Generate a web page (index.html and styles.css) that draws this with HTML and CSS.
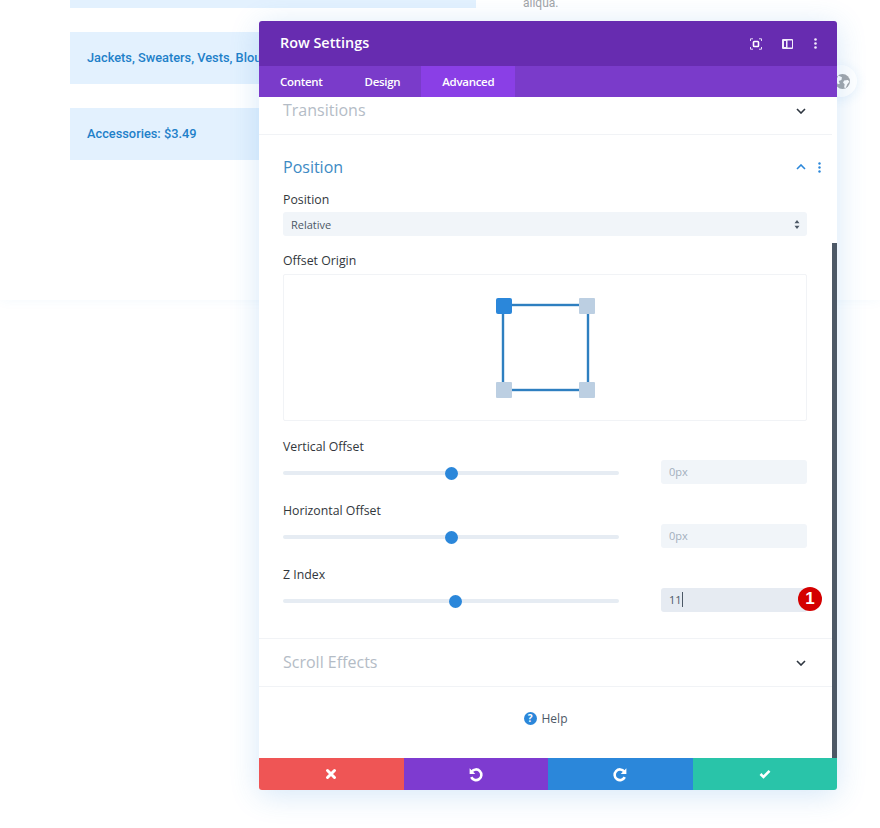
FILE: index.html
```html
<!DOCTYPE html>
<html lang="en">
<head>
<meta charset="utf-8">
<title>Row Settings</title>
<link rel="stylesheet" href="styles.css">
</head>
<body>
<div class="page">
  <section class="backdrop">
    <div class="list">
      <div class="chip chip-top"></div>
      <div class="chip">Jackets, Sweaters, Vests, Blouses: $5.99</div>
      <div class="chip">Accessories: $3.49</div>
    </div>
    <p class="side-text">aliqua.</p>
  </section>

  <div class="globe-btn">
    <svg class="globe" viewBox="0 0 14 14" width="15" height="15"><circle cx="7" cy="7" r="7" fill="#a3a6aa"/><path d="M3 1.500 6.500 3 6 5.500 3.500 6.500 4.500 9 2.500 9.500 1 6ZM8.500 6 12 5.500 13.500 7 11.500 9.500 10 13 8.500 12.500 9 9.500 7.500 8Z" fill="#fff"/></svg>
  </div>

  <div class="modal">
    <header class="modal-head">
      <h1 class="modal-title">Row Settings</h1>
      <div class="head-icons">
        <svg class="ic-focus" viewBox="0 0 12 12" width="12" height="12"><path d="M.5 3V.8H3M9 .8h2.500V3M11.500 9v2.200H9M3 11.200H.5V9" fill="none" stroke="#e6d9f5" stroke-width="1"/><rect x="3.500" y="3.500" width="5" height="5" rx=".8" fill="none" stroke="#fff" stroke-width="1.600"/></svg>
        <svg class="ic-split" viewBox="0 0 11 10" width="11" height="10"><path d="M1 0h9a1 1 0 0 1 1 1v8a1 1 0 0 1-1 1H1a1 1 0 0 1-1-1V1a1 1 0 0 1 1-1Zm1 2v6h2V2Zm3.500-.5v7H10v-7Z" fill="#f3ecfb" fill-rule="evenodd"/></svg>
        <svg class="ic-dots" viewBox="0 0 3 11" width="3" height="11"><circle cx="1.500" cy="1.500" r="1.300" fill="#f3ecfb"/><circle cx="1.500" cy="5.500" r="1.300" fill="#f3ecfb"/><circle cx="1.500" cy="9.500" r="1.300" fill="#f3ecfb"/></svg>
      </div>
    </header>
    <nav class="tabs">
      <span class="tab">Content</span>
      <span class="tab">Design</span>
      <span class="tab tab-active">Advanced</span>
    </nav>

    <div class="modal-body">
      <div class="scrollbar"></div>
      <div class="group group-transitions">
        <h2 class="group-title">Transitions</h2>
        <svg class="chev" viewBox="0 0 10 6" width="10" height="6"><path d="M1 1l4 4 4-4" fill="none" stroke="#2e3640" stroke-width="1.600"/></svg>
      </div>

      <div class="group group-position">
        <div class="position-head">
          <h2 class="group-title group-title-open">Position</h2>
          <svg class="chev chev-open" viewBox="0 0 10 6" width="10" height="6"><path d="M1 5l4-4 4 4" fill="none" stroke="#2b87da" stroke-width="1.600"/></svg>
          <svg class="pos-dots" viewBox="0 0 3 11" width="3" height="11"><circle cx="1.500" cy="1.500" r="1.200" fill="#2b87da"/><circle cx="1.500" cy="5.500" r="1.200" fill="#2b87da"/><circle cx="1.500" cy="9.500" r="1.200" fill="#2b87da"/></svg>
        </div>

        <div class="label label-first">Position</div>
        <div class="select">
          <span>Relative</span>
          <svg viewBox="0 0 6 9" width="6" height="9"><path d="M3 0l2.500 3.300h-5ZM3 9 .5 5.700h5Z" fill="#4c5866"/></svg>
        </div>

        <div class="label label-origin">Offset Origin</div>
        <div class="origin">
          <svg viewBox="0 0 100 100" width="100" height="100">
            <rect x="7" y="7" width="85" height="85" fill="none" stroke="#2e7fc0" stroke-width="2.400"/>
            <rect x="0" y="0" width="16" height="16" rx="2" fill="#2b87da"/>
            <rect x="83" y="0" width="16" height="16" rx="1" fill="#bccfe2"/>
            <rect x="0" y="84" width="16" height="16" rx="1" fill="#bccfe2"/>
            <rect x="83" y="84" width="16" height="16" rx="1" fill="#bccfe2"/>
          </svg>
        </div>

        <div class="label label-range">Vertical Offset</div>
        <div class="range-row">
          <div class="track"><span class="thumb" style="left:50%"></span></div>
          <div class="input">0px</div>
        </div>

        <div class="label label-range">Horizontal Offset</div>
        <div class="range-row">
          <div class="track"><span class="thumb" style="left:50%"></span></div>
          <div class="input">0px</div>
        </div>

        <div class="label label-range">Z Index</div>
        <div class="range-row">
          <div class="track"><span class="thumb" style="left:51.200%"></span></div>
          <div class="input input-focus"><span class="caret">11</span><span class="badge">1</span></div>
        </div>
      </div>

      <div class="group group-scroll">
        <h2 class="group-title">Scroll Effects</h2>
        <svg class="chev" viewBox="0 0 10 6" width="10" height="6"><path d="M1 1l4 4 4-4" fill="none" stroke="#2e3640" stroke-width="1.600"/></svg>
      </div>

      <div class="help"><span class="help-ic">?</span><span>Help</span></div>
    </div>

    <footer class="modal-foot">
      <button class="act act-cancel" type="button"><svg viewBox="0 0 12 12" width="12" height="12"><path d="M2.500 2.500l7 7M9.500 2.500l-7 7" stroke="#fff" stroke-width="3" stroke-linecap="round" fill="none"/></svg></button>
      <button class="act act-undo" type="button"><svg viewBox="0 0 14 14" width="15" height="15"><path d="M3.500 4.200A5 5 0 1 1 3 9.500" fill="none" stroke="#fff" stroke-width="2.400"/><path d="M1.500 1.200v5.300h5.300Z" fill="#fff"/></svg></button>
      <button class="act act-redo" type="button"><svg viewBox="0 0 14 14" width="15" height="15"><path d="M10.500 4.200A5 5 0 1 0 11 9.500" fill="none" stroke="#fff" stroke-width="2.400"/><path d="M12.500 1.200v5.300H7.200Z" fill="#fff"/></svg></button>
      <button class="act act-save" type="button"><svg viewBox="0 0 12 10" width="12" height="10"><path d="M1.500 5l3 3 6-6.200" fill="none" stroke="#fff" stroke-width="2.600"/></svg></button>
    </footer>
  </div>
</div>
</body>
</html>
```

FILE: styles.css
```css
* { box-sizing: border-box; }
html, body { margin: 0; height: 100%; background: #fff; }
body { overflow: hidden; font-family: "Open Sans", "Liberation Sans", sans-serif; }

.page { position: relative; width: 880px; height: 828px; overflow: hidden; }

.backdrop {
  display: flex;
  height: 300px;
  padding-left: 70px;
  background: #fff;
  box-shadow: 0 0 12px rgba(43, 135, 218, .05);
}
.list { width: 406px; display: flex; flex-direction: column; gap: 24px; }
.chip {
  height: 52px;
  padding-left: 17px;
  display: flex;
  align-items: center;
  background: #e3f1fe;
  color: #1e80c9;
  font: 500 12.800px/18px Roboto, sans-serif;
  white-space: nowrap;
  overflow: hidden;
}
.chip-top { height: 8px; }
.side-text {
  margin: -5px 0 0 47px;
  font: 400 12px/16px Roboto, sans-serif;
  color: #a2a4a7;
}

.globe-btn {
  position: absolute;
  left: 825px;
  top: 65px;
  width: 32px;
  height: 32px;
  border-radius: 50%;
  background: #fff;
  box-shadow: 0 2px 12px rgba(43, 135, 218, .12);
}
.globe { position: absolute; left: 10px; top: 9px; }

.modal {
  position: absolute;
  left: 259px;
  top: 21px;
  width: 578px;
  height: 769px;
  display: flex;
  flex-direction: column;
  border-radius: 3px;
  background: #fff;
  box-shadow: 0 5px 30px rgba(43, 135, 218, .2);
}
.modal-head {
  flex: none;
  height: 45px;
  display: flex;
  align-items: center;
  justify-content: space-between;
  padding: 0 21px 2px;
  background: #672cb0;
  border-radius: 3px 3px 0 0;
}
.modal-title { margin: 0; font-size: 14.400px; line-height: 20px; font-weight: 600; color: #fff; }
.head-icons { display: flex; align-items: center; padding-top: 2px; }
.ic-focus { margin-right: 20px; }
.ic-split { margin-right: 21px; }
.ic-dots { margin-right: -1px; }

.tabs { flex: none; height: 31px; display: flex; background: #7a3bca; }
.tab {
  padding: 0 21px;
  font-size: 11.500px;
  letter-spacing: -.3px;
  line-height: 31px;
  font-weight: 600;
  color: #fff;
}
.tab-active { background: #8a3fe6; }

.modal-body { position: relative; flex: 1; min-height: 0; padding-right: 5px; overflow: hidden; }
.scrollbar {
  position: absolute;
  right: 0;
  top: 146px;
  bottom: 0;
  width: 5px;
  background: #4c5866;
}

.group { border-bottom: 1px solid #f1f3f6; padding-left: 24px; }
.group-title { margin: 0; font-size: 16px; line-height: 24px; font-weight: 400; color: #b4bcc6; }
.group-transitions { position: relative; height: 38px; padding-top: 1px; }
.group-scroll { position: relative; height: 48px; padding-top: 11px; }
.chev { position: absolute; right: 26px; }
.group-transitions .chev { top: 11px; }
.group-scroll .chev { top: 21px; }

.group-position { height: 504px; padding-top: 20px; padding-right: 25px; }
.position-head { position: relative; height: 24px; }
.group-title-open { color: #3d8ac4; }
.chev-open { top: 9px; right: 1px; }
.pos-dots { position: absolute; right: -13.500px; top: 7px; }

.label { font-size: 12.300px; line-height: 20px; color: #32373c; }
.label-first { margin-top: 11px; }
.label-origin { margin-top: 15px; }
.label-range { margin-top: 16px; }
.range-row + .label-range { margin-top: 17px; }

.select {
  height: 24px;
  margin-top: 2px;
  padding: 0 7px 0 8px;
  display: flex;
  align-items: center;
  justify-content: space-between;
  background: #f1f5f9;
  border-radius: 3px;
  font-size: 11px;
  color: #4c5866;
}
.origin {
  height: 147px;
  margin-top: 3px;
  display: flex;
  align-items: flex-start;
  justify-content: center;
  padding: 23px 0 0 2px;
  border: 1px solid #f1f3f6;
  border-radius: 2px;
}

.range-row { display: flex; align-items: center; justify-content: space-between; margin-top: 3px; }
.track { position: relative; width: 336px; height: 4px; margin-top: 2px; border-radius: 2px; background: #e6ecf3; }
.thumb {
  position: absolute;
  top: 50%;
  width: 13px;
  height: 13px;
  margin: -6.500px 0 0 -6.500px;
  border-radius: 50%;
  background: #2b87da;
}
.input {
  position: relative;
  width: 146px;
  height: 24px;
  padding-left: 8px;
  background: #f1f5f9;
  border-radius: 3px;
  font-size: 11px;
  line-height: 24px;
  color: #a3afbd;
}
.input-focus { background: #e6ebf2; color: #4c5866; }
.caret { border-right: 1px solid #4c5866; }
.badge {
  position: absolute;
  right: -15px;
  top: -1px;
  width: 24px;
  height: 24px;
  border-radius: 50%;
  background: #d40000;
  color: #fff;
  font: 700 17px/24px "Liberation Sans", sans-serif;
  text-align: center;
}

.help {
  height: 72px;
  display: flex;
  align-items: center;
  justify-content: center;
  gap: 5px;
  padding-bottom: 10px;
  font-size: 12px;
  color: #4c5866;
}
.help-ic {
  width: 13px;
  height: 13px;
  border-radius: 50%;
  background: #2b87da;
  color: #fff;
  font-size: 10px;
  font-weight: 700;
  line-height: 13px;
  text-align: center;
}

.modal-foot { flex: none; height: 32px; display: flex; }
.act {
  flex: 1;
  margin: 0;
  padding: 0;
  border: 0;
  display: flex;
  align-items: center;
  justify-content: center;
}
.act-cancel { background: #ef5555; border-radius: 0 0 0 3px; }
.act-undo { background: #7e3bd0; }
.act-redo { background: #2b87da; }
.act-save { background: #29c4a9; border-radius: 0 0 3px 0; }
```
